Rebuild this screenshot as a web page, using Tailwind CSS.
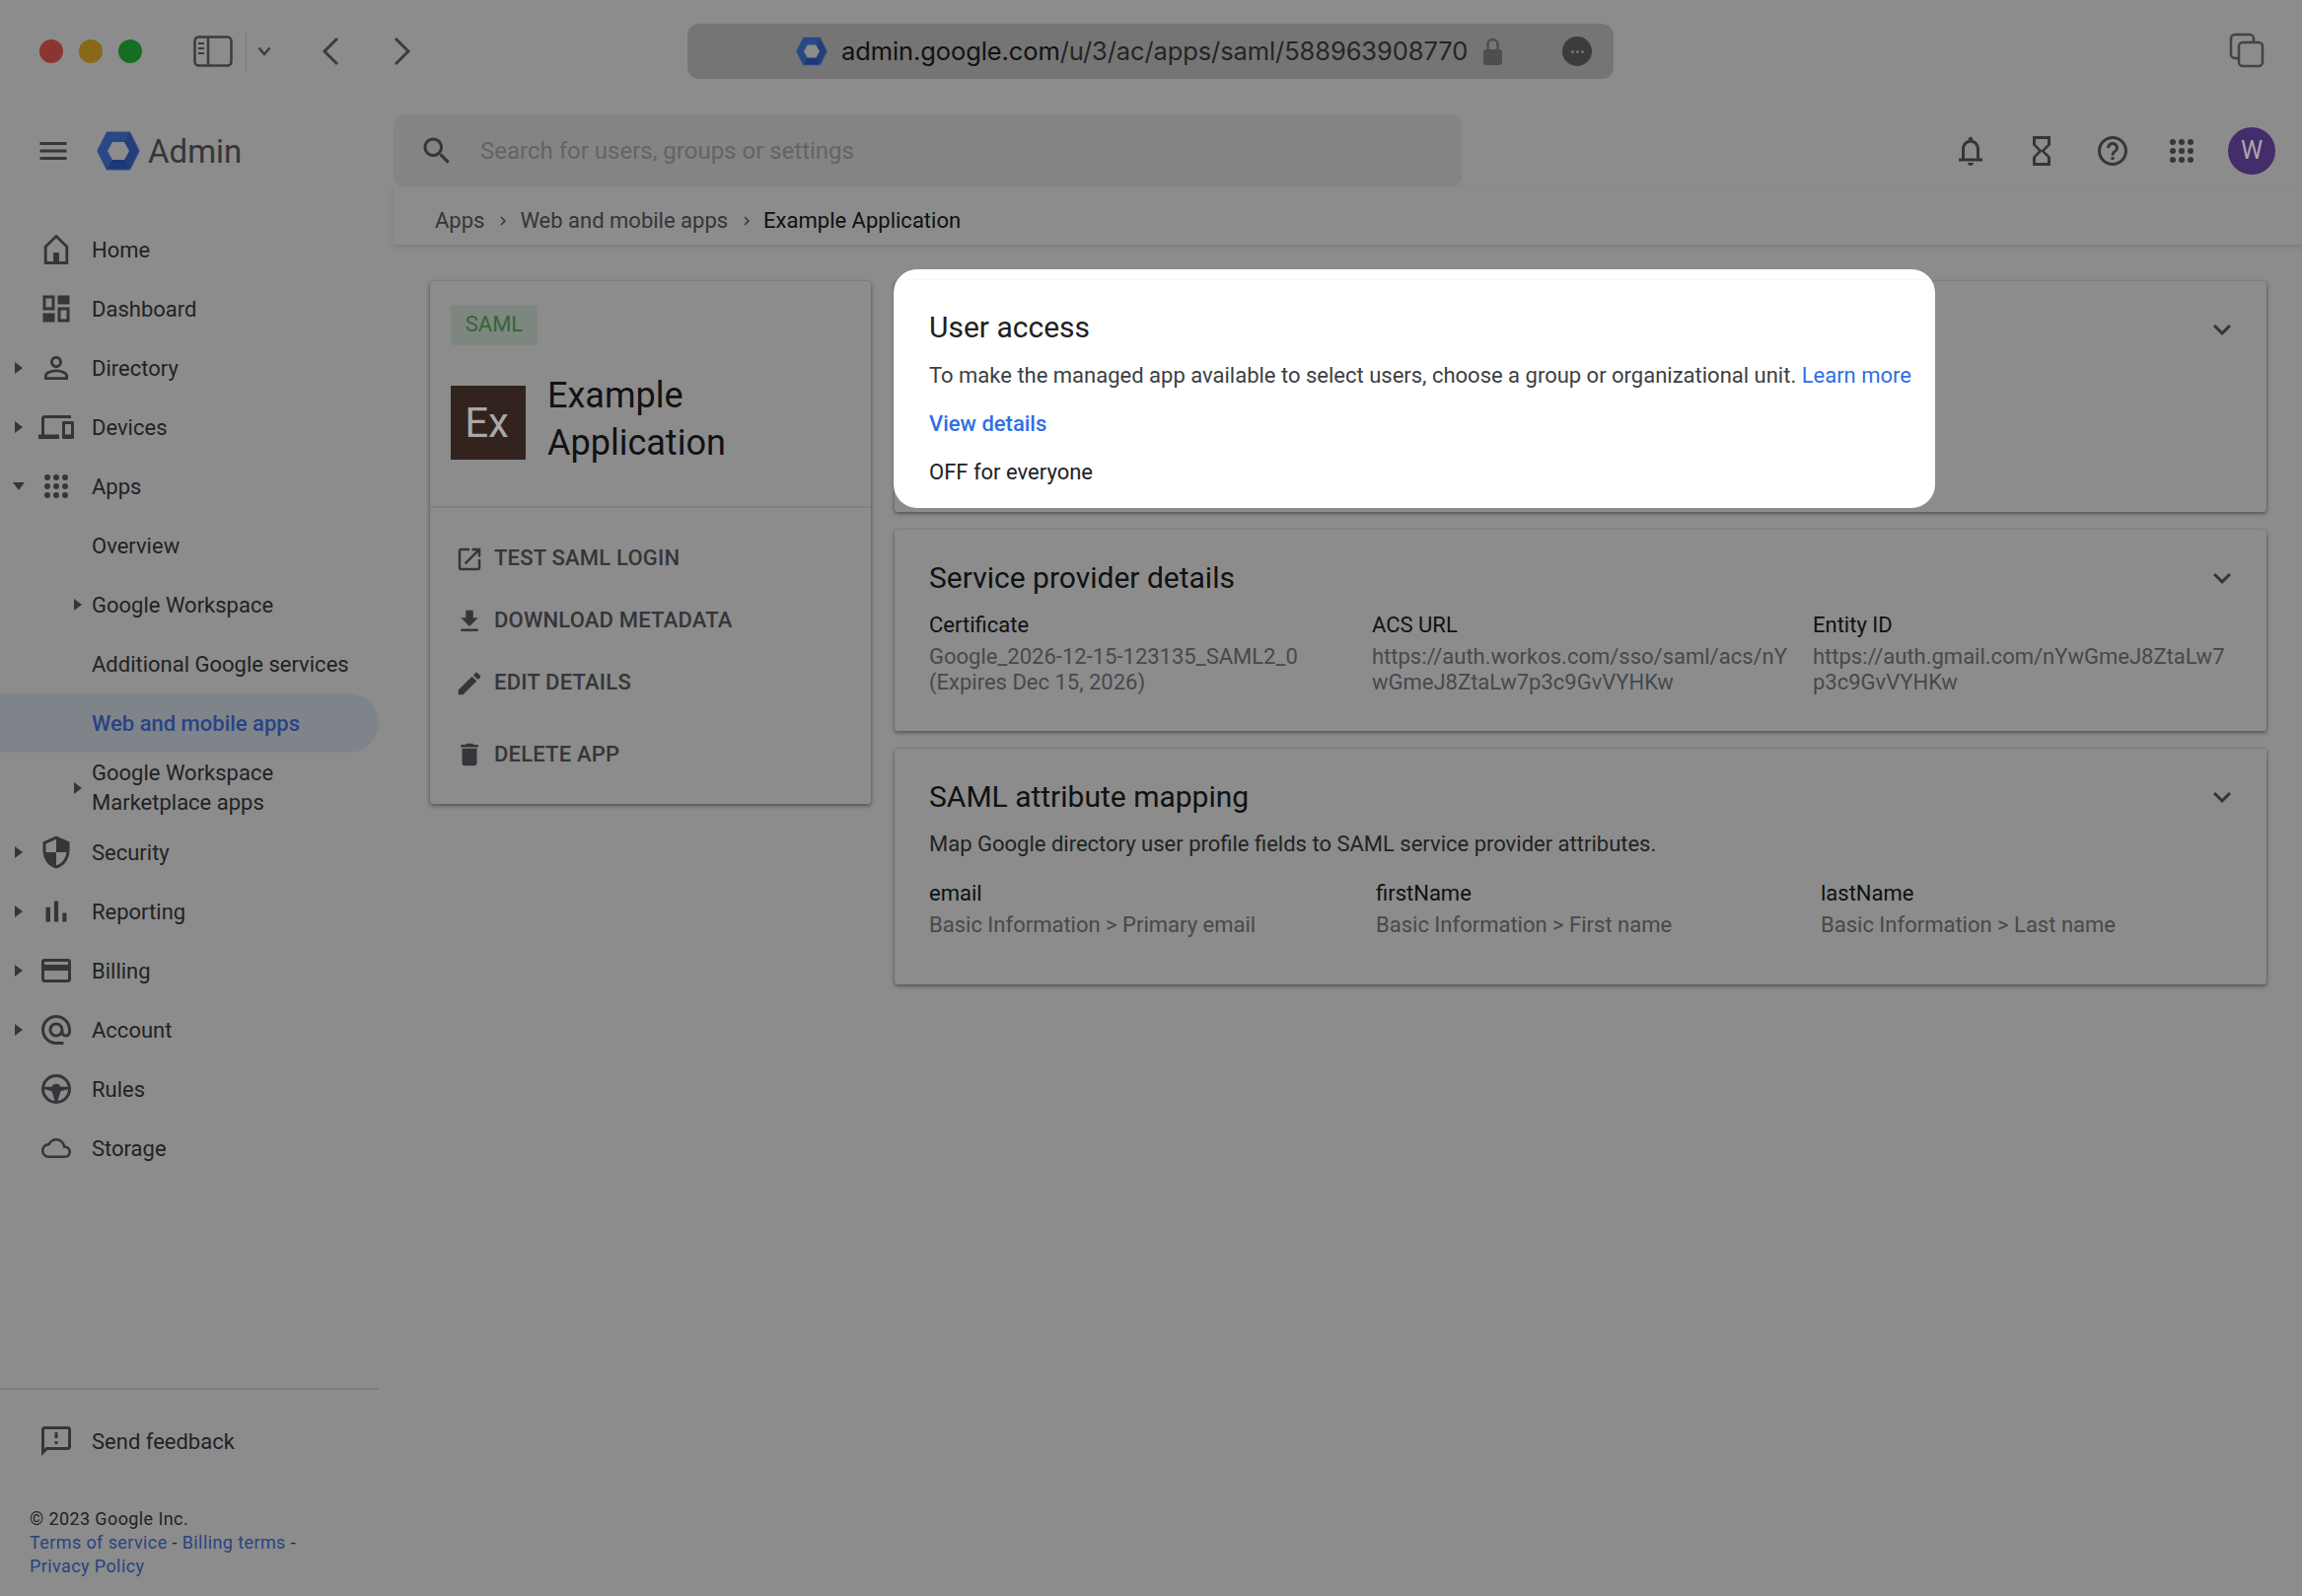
<!DOCTYPE html>
<html lang="en">
<head>
<meta charset="utf-8">
<title>Example Application - Admin</title>
<script src="https://cdn.jsdelivr.net/npm/@tailwindcss/browser@4"></script>
</head>
<body class="m-0">
<div class="relative w-[2334px] h-[1618px] bg-white overflow-hidden font-[Roboto,sans-serif] text-[#3c4043]">

  <!-- browser toolbar -->
  <div class="h-[104px] flex items-center relative">
    <div class="flex items-center gap-[16px] ml-[40px]">
      <span class="w-[24px] h-[24px] rounded-full bg-[#ff5f57]"></span>
      <span class="w-[24px] h-[24px] rounded-full bg-[#febc2e]"></span>
      <span class="w-[24px] h-[24px] rounded-full bg-[#28c840]"></span>
    </div>
    <svg class="ml-[52px]" width="40" height="32" viewBox="0 0 40 32" fill="none" stroke="#6e6e6e" stroke-width="2.5"><rect x="1.5" y="1.5" width="37" height="29" rx="4"/><path d="M15 2v28"/><path d="M5 8h6M5 13h6M5 18h6" stroke-width="2"/></svg>
    <span class="ml-[13px] w-px h-[40px] bg-[#dcdcdc]"></span>
    <svg class="ml-[11px]" width="14" height="10" viewBox="0 0 14 10" fill="none" stroke="#6e6e6e" stroke-width="2.4"><path d="M1.5 1.5 7 8l5.500-6.500"/></svg>
    <svg class="ml-[51px]" width="18" height="30" viewBox="0 0 18 30" fill="none" stroke="#6e6e6e" stroke-width="3"><path d="M16 2 3 15l13 13"/></svg>
    <svg class="ml-[55px]" width="18" height="30" viewBox="0 0 18 30" fill="none" stroke="#6e6e6e" stroke-width="3"><path d="m2 2 13 13L2 28"/></svg>
    <div class="ml-[280px] w-[939px] h-[56px] rounded-[12px] bg-[#d5d5d5] flex items-center pl-[110px]">
      <svg width="32" height="30" viewBox="0 0 44 40"><polygon points="11,2 33,2 42,20 33,38 11,38 2,20" fill="#4a86f5" stroke="#4a86f5" stroke-width="3" stroke-linejoin="round"/><polygon points="33,2 42,20 33,38 28,29 33,20 28,11" fill="#3f74dc"/><polygon points="11,38 16,29 28,29 33,38" fill="#3367d6"/><polygon points="16,11 28,11 33,20 28,29 16,29 11,20" fill="#fff"/></svg>
      <span class="ml-[14px] text-[25.5px] leading-[56px] font-[Inter,sans-serif] text-[#222] whitespace-nowrap tracking-[-0.1px]">admin.google.com<span class="text-[#444]">/u/3/ac/apps/saml/588963908770</span></span>
      <svg class="ml-[16px]" width="19" height="28" viewBox="0 0 19 28" fill="none"><path d="M4.500 13V7a5 5 0 0 1 10 0v6" stroke="#8f8f8f" stroke-width="2.500"/><rect x="0" y="12" width="19" height="16" rx="3" fill="#8f8f8f"/></svg>
      <span class="ml-[61px] w-[30px] h-[30px] rounded-full bg-[#6e6e6e] flex items-center justify-center gap-[2px]"><i class="w-[3px] h-[3px] rounded-full bg-[#d5d5d5]"></i><i class="w-[3px] h-[3px] rounded-full bg-[#d5d5d5]"></i><i class="w-[3px] h-[3px] rounded-full bg-[#d5d5d5]"></i></span>
    </div>
    <svg class="absolute left-[2260px] top-[33px]" width="36" height="36" viewBox="0 0 36 36" fill="none" stroke="#7a7a7a" stroke-width="2.500"><path d="M10 26H6a4 4 0 0 1-4-4V6a4 4 0 0 1 4-4h15a4 4 0 0 1 4 4v4"/><rect x="10" y="10" width="24" height="24" rx="4"/></svg>
  </div>

  <!-- admin header -->
  <div class="mt-[12px] h-[73px] flex items-center">
    <div class="w-[399px] flex items-center shrink-0">
      <svg class="ml-[36px]" width="36" height="36" viewBox="0 0 24 24" fill="#5f6368"><path d="M3 18h18v-2H3v2zm0-5h18v-2H3v2zm0-7v2h18V6H3z"/></svg>
      <svg class="ml-[26px]" width="44" height="40" viewBox="0 0 44 40"><polygon points="11,2 33,2 42,20 33,38 11,38 2,20" fill="#4a86f5" stroke="#4a86f5" stroke-width="3" stroke-linejoin="round"/><polygon points="33,2 42,20 33,38 28,29 33,20 28,11" fill="#3f74dc"/><polygon points="11,38 16,29 28,29 33,38" fill="#3367d6"/><polygon points="16,11 28,11 33,20 28,29 16,29 11,20" fill="#fff"/></svg>
      <span class="ml-[8px] pt-[2px] text-[33px] leading-[40px] text-[#5f6368]">Admin</span>
    </div>
    <div class="w-[1083px] h-[73px] rounded-[10px] bg-[#f0f0f0] flex items-center pl-[26px]">
      <svg width="36" height="36" viewBox="0 0 24 24" fill="#5f6368"><path d="M15.500 14h-.79l-.28-.27C15.410 12.590 16 11.110 16 9.500 16 5.910 13.090 3 9.500 3S3 5.910 3 9.500 5.910 16 9.500 16c1.610 0 3.090-.59 4.230-1.570l.27.28v.79l5 4.990L20.490 19l-4.990-5zm-6 0C7.010 14 5 11.990 5 9.500S7.010 5 9.500 5 14 7.010 14 9.500 11.990 14 9.500 14z"/></svg>
      <span class="ml-[26px] text-[24px] text-[#b4b6b9]">Search for users, groups or settings</span>
    </div>
    <div class="flex items-center ml-[498px]">
      <svg width="36" height="36" viewBox="0 0 24 24" fill="#5f6368"><path fill-rule="evenodd" d="M4 17h2v-6c0-3.070 1.640-5.640 4.500-6.320V4c0-.83.67-1.500 1.500-1.500s1.500.67 1.500 1.500v.68C16.370 5.360 18 7.930 18 11v6h2v2H4zM8 17h8v-6c0-2.480-1.510-4.500-4-4.500S8 8.520 8 11z"/><path d="M10 20h4c0 1.100-.9 2-2 2s-2-.9-2-2z"/></svg>
      <svg class="ml-[36px]" width="36" height="36" viewBox="0 0 24 24" fill="#5f6368"><path d="M6 2v6h.01L6 8.010 10 12l-4 4 .01.01H6V22h12v-5.990h-.01L18 16l-4-4 4-3.990-.01-.01H18V2H6zm10 14.500V20H8v-3.500l4-4 4 4zm-4-5-4-4V4h8v3.500l-4 4z"/></svg>
      <svg class="ml-[36px]" width="36" height="36" viewBox="0 0 24 24" fill="#5f6368"><path d="M11 18h2v-2h-2v2zm1-16C6.480 2 2 6.480 2 12s4.480 10 10 10 10-4.480 10-10S17.520 2 12 2zm0 18c-4.410 0-8-3.590-8-8s3.590-8 8-8 8 3.590 8 8-3.590 8-8 8zm0-14c-2.210 0-4 1.790-4 4h2c0-1.100.9-2 2-2s2 .9 2 2c0 2-3 1.750-3 5h2c0-2.250 3-2.500 3-5 0-2.210-1.790-4-4-4z"/></svg>
      <svg class="ml-[34px]" width="36" height="36" viewBox="0 0 24 24" fill="#5f6368"><circle cx="6" cy="6" r="2"/><circle cx="12" cy="6" r="2"/><circle cx="18" cy="6" r="2"/><circle cx="6" cy="12" r="2"/><circle cx="12" cy="12" r="2"/><circle cx="18" cy="12" r="2"/><circle cx="6" cy="18" r="2"/><circle cx="12" cy="18" r="2"/><circle cx="18" cy="18" r="2"/></svg>
      <span class="ml-[29px] w-[48px] h-[48px] rounded-full bg-[#7b52c4] flex items-center justify-center"><span class="relative z-10 text-[25px] text-[#a8a8a8]">W</span></span>
    </div>
  </div>

  <!-- body -->
  <div class="flex items-start">
    <!-- sidebar -->
    <aside class="w-[384px] h-[1429px] shrink-0 flex flex-col pt-[34px] text-[22px] text-[#3c4043]">
      <div class="h-[60px] flex items-center"><span class="w-[36px]"></span><span class="w-[42px] flex justify-center"><svg width="36" height="36" viewBox="0 0 24 24"><path d="M12 3 4.800 10V21h14.400V10Z" fill="none" stroke="#5f6368" stroke-width="1.900"/><rect x="10" y="14" width="4" height="7" fill="#5f6368"/></svg></span><span class="ml-[15px] pt-[1px]">Home</span></div>
      <div class="h-[60px] flex items-center"><span class="w-[36px]"></span><span class="w-[42px] flex justify-center"><svg width="36" height="36" viewBox="0 0 24 24" fill="#5f6368"><path fill-rule="evenodd" d="M3 3h8v10H3zM5 5v6h4V5zM13 3h8v6h-8zM3 15h8v6H3zM13 11h8v10h-8zM15 13v6h4v-6z"/></svg></span><span class="ml-[15px] pt-[1px]">Dashboard</span></div>
      <div class="h-[60px] flex items-center"><span class="w-[36px] pl-[2px] flex justify-center"><svg width="8" height="12" viewBox="0 0 8 12" fill="#5f6368"><path d="M0 0l8 6-8 6z"/></svg></span><span class="w-[42px] flex justify-center"><svg width="36" height="36" viewBox="0 0 24 24" fill="#5f6368"><path d="M12 5.900c1.160 0 2.100.94 2.100 2.100s-.94 2.100-2.100 2.100S9.900 9.160 9.900 8s.94-2.100 2.100-2.100m0 9c2.970 0 6.100 1.460 6.100 2.100v1.100H5.900V17c0-.64 3.130-2.100 6.100-2.100M12 4C9.790 4 8 5.790 8 8s1.790 4 4 4 4-1.790 4-4-1.790-4-4-4zm0 9c-2.670 0-8 1.340-8 4v3h16v-3c0-2.660-5.330-4-8-4z"/></svg></span><span class="ml-[15px] pt-[1px]">Directory</span></div>
      <div class="h-[60px] flex items-center"><span class="w-[36px] pl-[2px] flex justify-center"><svg width="8" height="12" viewBox="0 0 8 12" fill="#5f6368"><path d="M0 0l8 6-8 6z"/></svg></span><span class="w-[42px] flex justify-center"><svg width="36" height="36" viewBox="0 0 24 24" fill="#5f6368"><path d="M4 6h18V4H4c-1.100 0-2 .9-2 2v11H0v3h14v-3H4V6zm19 2h-6c-.55 0-1 .45-1 1v10c0 .55.45 1 1 1h6c.55 0 1-.45 1-1V9c0-.55-.45-1-1-1zm-1 9h-4v-7h4v7z"/></svg></span><span class="ml-[15px] pt-[1px]">Devices</span></div>
      <div class="h-[60px] flex items-center"><span class="w-[36px] pl-[2px] flex justify-center"><svg width="12" height="8" viewBox="0 0 12 8" fill="#5f6368"><path d="M0 0h12L6 8z"/></svg></span><span class="w-[42px] flex justify-center"><svg width="36" height="36" viewBox="0 0 24 24" fill="#5f6368"><circle cx="6" cy="6" r="2"/><circle cx="12" cy="6" r="2"/><circle cx="18" cy="6" r="2"/><circle cx="6" cy="12" r="2"/><circle cx="12" cy="12" r="2"/><circle cx="18" cy="12" r="2"/><circle cx="6" cy="18" r="2"/><circle cx="12" cy="18" r="2"/><circle cx="18" cy="18" r="2"/></svg></span><span class="ml-[15px] pt-[1px]">Apps</span></div>
      <div class="h-[60px] flex items-center pl-[93px] pt-[1px]">Overview</div>
      <div class="h-[60px] flex items-center"><span class="w-[83px] flex justify-end"><svg width="8" height="12" viewBox="0 0 8 12" fill="#5f6368"><path d="M0 0l8 6-8 6z"/></svg></span><span class="ml-[10px] pt-[1px]">Google Workspace</span></div>
      <div class="h-[60px] flex items-center pl-[93px] pt-[1px]">Additional Google services</div>
      <div class="h-[60px] flex items-center pl-[93px] pt-[1px] rounded-r-full bg-[#e8f0fe] text-[#4a7df0] font-medium">Web and mobile apps</div>
      <div class="h-[71px] flex items-center"><span class="w-[83px] flex justify-end"><svg width="8" height="12" viewBox="0 0 8 12" fill="#5f6368"><path d="M0 0l8 6-8 6z"/></svg></span><span class="ml-[10px] pt-[1px] leading-[30px]">Google Workspace<br>Marketplace apps</span></div>
      <div class="h-[60px] flex items-center"><span class="w-[36px] pl-[2px] flex justify-center"><svg width="8" height="12" viewBox="0 0 8 12" fill="#5f6368"><path d="M0 0l8 6-8 6z"/></svg></span><span class="w-[42px] flex justify-center"><svg width="36" height="36" viewBox="0 0 24 24" fill="#5f6368"><path d="M12 1 3 5v6c0 5.550 3.840 10.740 9 12 5.160-1.260 9-6.450 9-12V5l-9-4zm0 10.990h7c-.53 4.120-3.280 7.790-7 8.940V12H5V6.300l7-3.110v8.800z"/></svg></span><span class="ml-[15px] pt-[1px]">Security</span></div>
      <div class="h-[60px] flex items-center"><span class="w-[36px] pl-[2px] flex justify-center"><svg width="8" height="12" viewBox="0 0 8 12" fill="#5f6368"><path d="M0 0l8 6-8 6z"/></svg></span><span class="w-[42px] flex justify-center"><svg width="36" height="36" viewBox="0 0 24 24" fill="#5f6368"><path d="M5 9.200h3V19H5zM10.600 5h2.800v14h-2.800zm5.600 8H19v6h-2.800z"/></svg></span><span class="ml-[15px] pt-[1px]">Reporting</span></div>
      <div class="h-[60px] flex items-center"><span class="w-[36px] pl-[2px] flex justify-center"><svg width="8" height="12" viewBox="0 0 8 12" fill="#5f6368"><path d="M0 0l8 6-8 6z"/></svg></span><span class="w-[42px] flex justify-center"><svg width="36" height="36" viewBox="0 0 24 24" fill="#5f6368"><path d="M20 4H4c-1.110 0-1.990.89-1.990 2L2 18c0 1.110.89 2 2 2h16c1.110 0 2-.89 2-2V6c0-1.110-.89-2-2-2zm0 14H4v-6h16v6zm0-10H4V6h16v2z"/></svg></span><span class="ml-[15px] pt-[1px]">Billing</span></div>
      <div class="h-[60px] flex items-center"><span class="w-[36px] pl-[2px] flex justify-center"><svg width="8" height="12" viewBox="0 0 8 12" fill="#5f6368"><path d="M0 0l8 6-8 6z"/></svg></span><span class="w-[42px] flex justify-center"><svg width="36" height="36" viewBox="0 0 24 24" fill="#5f6368"><path d="M12 2C6.480 2 2 6.480 2 12s4.480 10 10 10h5v-2h-5c-4.340 0-8-3.660-8-8s3.660-8 8-8 8 3.660 8 8v1.430c0 .79-.71 1.570-1.500 1.570s-1.500-.78-1.500-1.570V12c0-2.760-2.240-5-5-5s-5 2.240-5 5 2.240 5 5 5c1.380 0 2.640-.56 3.540-1.470.65.89 1.770 1.470 2.960 1.470 1.970 0 3.500-1.600 3.500-3.570V12c0-5.520-4.480-10-10-10zm0 13c-1.660 0-3-1.340-3-3s1.340-3 3-3 3 1.340 3 3-1.340 3-3 3z"/></svg></span><span class="ml-[15px] pt-[1px]">Account</span></div>
      <div class="h-[60px] flex items-center"><span class="w-[36px]"></span><span class="w-[42px] flex justify-center"><svg width="36" height="36" viewBox="0 0 24 24" fill="none"><circle cx="12" cy="12" r="9" stroke="#5f6368" stroke-width="2"/><path d="M3.500 10.500h5.500a3.300 3.300 0 0 1 6 0h5.500v1.500L15 13.500 13 20h-2L9 13.500 3.500 12z" fill="#5f6368"/></svg></span><span class="ml-[15px] pt-[1px]">Rules</span></div>
      <div class="h-[60px] flex items-center"><span class="w-[36px]"></span><span class="w-[42px] flex justify-center"><svg width="30" height="30" viewBox="0 0 24 24" fill="#5f6368"><path d="M19.350 10.040C18.670 6.590 15.640 4 12 4 9.110 4 6.600 5.640 5.350 8.040 2.340 8.360 0 10.910 0 14c0 3.310 2.690 6 6 6h13c2.760 0 5-2.240 5-5 0-2.640-2.050-4.780-4.650-4.960zM19 18H6c-2.210 0-4-1.790-4-4 0-2.050 1.530-3.760 3.560-3.970l1.070-.11.5-.95C8.080 7.140 9.940 6 12 6c2.620 0 4.880 1.860 5.390 4.430l.3 1.500 1.530.11c1.560.1 2.780 1.410 2.780 2.960 0 1.650-1.350 3-3 3z"/></svg></span><span class="ml-[15px] pt-[1px]">Storage</span></div>
      <div class="mt-auto border-t-2 border-[#e0e0e0]">
        <div class="h-[103px] mb-[16px] flex items-center"><span class="w-[36px]"></span><span class="w-[42px] flex justify-center"><svg width="36" height="36" viewBox="0 0 24 24" fill="#5f6368"><path d="M20 2H4c-1.100 0-1.990.9-1.990 2L2 22l4-4h14c1.100 0 2-.9 2-2V4c0-1.100-.9-2-2-2zm0 14H5.170L4 17.170V4h16v12zM11 12h2v2h-2zm0-6h2v4h-2z"/></svg></span><span class="ml-[15px] pt-[2px]">Send feedback</span></div>
        <div class="pl-[30px] pb-[18px] text-[18px] leading-[24px] tracking-[0.4px]">
          © 2023 Google Inc.<br>
          <a class="text-[#4a7df0]">Terms of service</a> - <a class="text-[#4a7df0]">Billing terms</a> -<br>
          <a class="text-[#4a7df0]">Privacy Policy</a>
        </div>
      </div>
    </aside>

    <!-- main -->
    <main class="ml-[15px] flex-1 min-w-0">
      <div class="h-[59px] flex items-center pl-[42px] pt-[10px] text-[22px] text-[#5f6368] bg-white shadow-[0_3px_6px_rgba(60,64,67,0.14)]">
        <span>Apps</span>
        <svg class="ml-[10px] mr-[8px]" width="18" height="18" viewBox="0 0 24 24" fill="#5f6368"><path d="M8.590 16.590 13.170 12 8.590 7.410 10 6l6 6-6 6z"/></svg>
        <span>Web and mobile apps</span>
        <svg class="ml-[10px] mr-[8px]" width="18" height="18" viewBox="0 0 24 24" fill="#5f6368"><path d="M8.590 16.590 13.170 12 8.590 7.410 10 6l6 6-6 6z"/></svg>
        <span class="text-[#202124]">Example Application</span>
      </div>

      <div class="flex items-start pl-[37px] pt-[37px] pr-[36px] gap-[24px]">
        <!-- app card -->
        <section class="w-[447px] h-[530px] shrink-0 rounded-[3px] bg-white shadow-[0_2px_4px_rgba(60,64,67,0.5),0_0_2px_rgba(60,64,67,0.3)]">
          <div class="h-[230px] border-b-2 border-[#ececec] px-[21px] pt-[24px]">
            <span class="block w-[88px] h-[41px] rounded-[3px] bg-[#e6f4ea] text-[#5fb868] text-[22px] leading-[39px] text-center">SAML</span>
            <div class="flex items-start mt-[27px]">
              <span class="mt-[14px] w-[76px] h-[75px] bg-[#5d4037] flex items-center justify-center pr-[3px]"><span class="relative z-10 text-[42px] text-[#a8a8a8]">Ex</span></span>
              <span class="ml-[22px] text-[36px] leading-[48px] text-[#202124]">Example<br>Application</span>
            </div>
          </div>
          <div class="text-[22px] font-medium text-[#5f6368] tracking-[0.2px]">
            <div class="h-[63px] mt-[20px] flex items-center pl-[25px]"><svg width="30" height="30" viewBox="0 0 24 24" fill="#5f6368"><path d="M19 19H5V5h7V3H5c-1.110 0-2 .9-2 2v14c0 1.100.89 2 2 2h14c1.100 0 2-.9 2-2v-7h-2v7zM14 3v2h3.590l-9.830 9.830 1.410 1.410L19 6.410V10h2V3h-7z"/></svg><span class="ml-[10px] pb-[2px]">TEST SAML LOGIN</span></div>
            <div class="h-[63px] flex items-center pl-[25px]"><svg width="30" height="30" viewBox="0 0 24 24" fill="#5f6368"><path d="M19 9h-4V3H9v6H5l7 7 7-7zM5 18v2h14v-2H5z"/></svg><span class="ml-[10px] pb-[2px]">DOWNLOAD METADATA</span></div>
            <div class="h-[63px] flex items-center pl-[25px]"><svg width="30" height="30" viewBox="0 0 24 24" fill="#5f6368"><path d="M3 17.250V21h3.750L17.810 9.940l-3.750-3.750L3 17.250zM20.710 7.040c.39-.39.39-1.020 0-1.410l-2.340-2.340c-.39-.39-1.020-.39-1.410 0l-1.830 1.830 3.750 3.750 1.830-1.830z"/></svg><span class="ml-[10px] pb-[2px]">EDIT DETAILS</span></div>
            <div class="h-[63px] mt-[9px] flex items-center pl-[25px]"><svg width="30" height="30" viewBox="0 0 24 24" fill="#5f6368"><path d="M6 19c0 1.100.9 2 2 2h8c1.100 0 2-.9 2-2V7H6v12zM19 4h-3.500l-1-1h-5l-1 1H5v2h14V4z"/></svg><span class="ml-[10px] pb-[1px]">DELETE APP</span></div>
          </div>
        </section>

        <!-- detail cards -->
        <div class="flex-1 flex flex-col gap-[18px]">
          <section class="h-[234px] rounded-[3px] bg-white shadow-[0_2px_4px_rgba(60,64,67,0.5),0_0_2px_rgba(60,64,67,0.3)] flex justify-end pt-[31px] pr-[27px]">
            <svg width="36" height="36" viewBox="0 0 24 24" fill="#5f6368"><path d="M16.590 8.590 12 13.170 7.410 8.590 6 10l6 6 6-6z"/></svg>
          </section>

          <section class="h-[204px] rounded-[3px] bg-white shadow-[0_2px_4px_rgba(60,64,67,0.5),0_0_2px_rgba(60,64,67,0.3)] pl-[35px] pr-[27px] pt-[31px]">
            <div class="flex items-center justify-between h-[36px]">
              <h2 class="text-[30px] font-normal leading-[34px] text-[#202124]">Service provider details</h2>
              <svg width="36" height="36" viewBox="0 0 24 24" fill="#5f6368"><path d="M16.590 8.590 12 13.170 7.410 8.590 6 10l6 6 6-6z"/></svg>
            </div>
            <div class="grid grid-cols-[449px_447px_1fr] mt-[17px] text-[22px] text-[#80868b]">
              <div><div class="text-[#202124] leading-[25px] mb-[7px]">Certificate</div><div class="leading-[25.5px]">Google_2026-12-15-123135_SAML2_0<br>(Expires Dec 15, 2026)</div></div>
              <div><div class="text-[#202124] leading-[25px] mb-[7px]">ACS URL</div><div class="leading-[25.5px]">https://auth.workos.com/sso/saml/acs/nY<br>wGmeJ8ZtaLw7p3c9GvVYHKw</div></div>
              <div><div class="text-[#202124] leading-[25px] mb-[7px]">Entity ID</div><div class="leading-[25.5px]">https://auth.gmail.com/nYwGmeJ8ZtaLw7<br>p3c9GvVYHKw</div></div>
            </div>
          </section>

          <section class="h-[239px] rounded-[3px] bg-white shadow-[0_2px_4px_rgba(60,64,67,0.5),0_0_2px_rgba(60,64,67,0.3)] pl-[35px] pr-[27px] pt-[31px]">
            <div class="flex items-center justify-between h-[36px]">
              <h2 class="text-[30px] font-normal leading-[34px] text-[#202124]">SAML attribute mapping</h2>
              <svg width="36" height="36" viewBox="0 0 24 24" fill="#5f6368"><path d="M16.590 8.590 12 13.170 7.410 8.590 6 10l6 6 6-6z"/></svg>
            </div>
            <p class="mt-[17px] text-[22px] leading-[25px] text-[#3c4043]">Map Google directory user profile fields to SAML service provider attributes.</p>
            <div class="grid grid-cols-[453px_451px_1fr] mt-[25px] text-[22px] text-[#80868b]">
              <div><div class="text-[#202124] leading-[25px] mb-[7px]">email</div><div class="leading-[26px]">Basic Information &gt; Primary email</div></div>
              <div><div class="text-[#202124] leading-[25px] mb-[7px]">firstName</div><div class="leading-[26px]">Basic Information &gt; First name</div></div>
              <div><div class="text-[#202124] leading-[25px] mb-[7px]">lastName</div><div class="leading-[26px]">Basic Information &gt; Last name</div></div>
            </div>
          </section>
        </div>
      </div>
    </main>
  </div>

  <!-- dimming layer -->
  <div class="absolute inset-0 bg-black/45"></div>

  <!-- highlighted card -->
  <div class="absolute left-[906px] top-[273px] w-[1056px] h-[242px] rounded-[24px] bg-white overflow-hidden pl-[36px] pt-[42px]">
    <div class="absolute top-[10px] inset-x-0 h-px bg-[#f7f7f7]"></div>
    <h2 class="text-[30px] font-normal leading-[34px] text-[#202124]">User access</h2>
    <p class="mt-[19px] text-[22px] leading-[25px] text-[#3c4043] whitespace-nowrap">To make the managed app available to select users, choose a group or organizational unit. <a class="text-[#2f6fe4]">Learn more</a></p>
    <a class="block mt-[24px] text-[22px] leading-[25px] font-medium text-[#2f6fe4]">View details</a>
    <p class="mt-[24px] text-[22px] leading-[25px] text-[#202124]">OFF for everyone</p>
  </div>
</div>
</body>
</html>
